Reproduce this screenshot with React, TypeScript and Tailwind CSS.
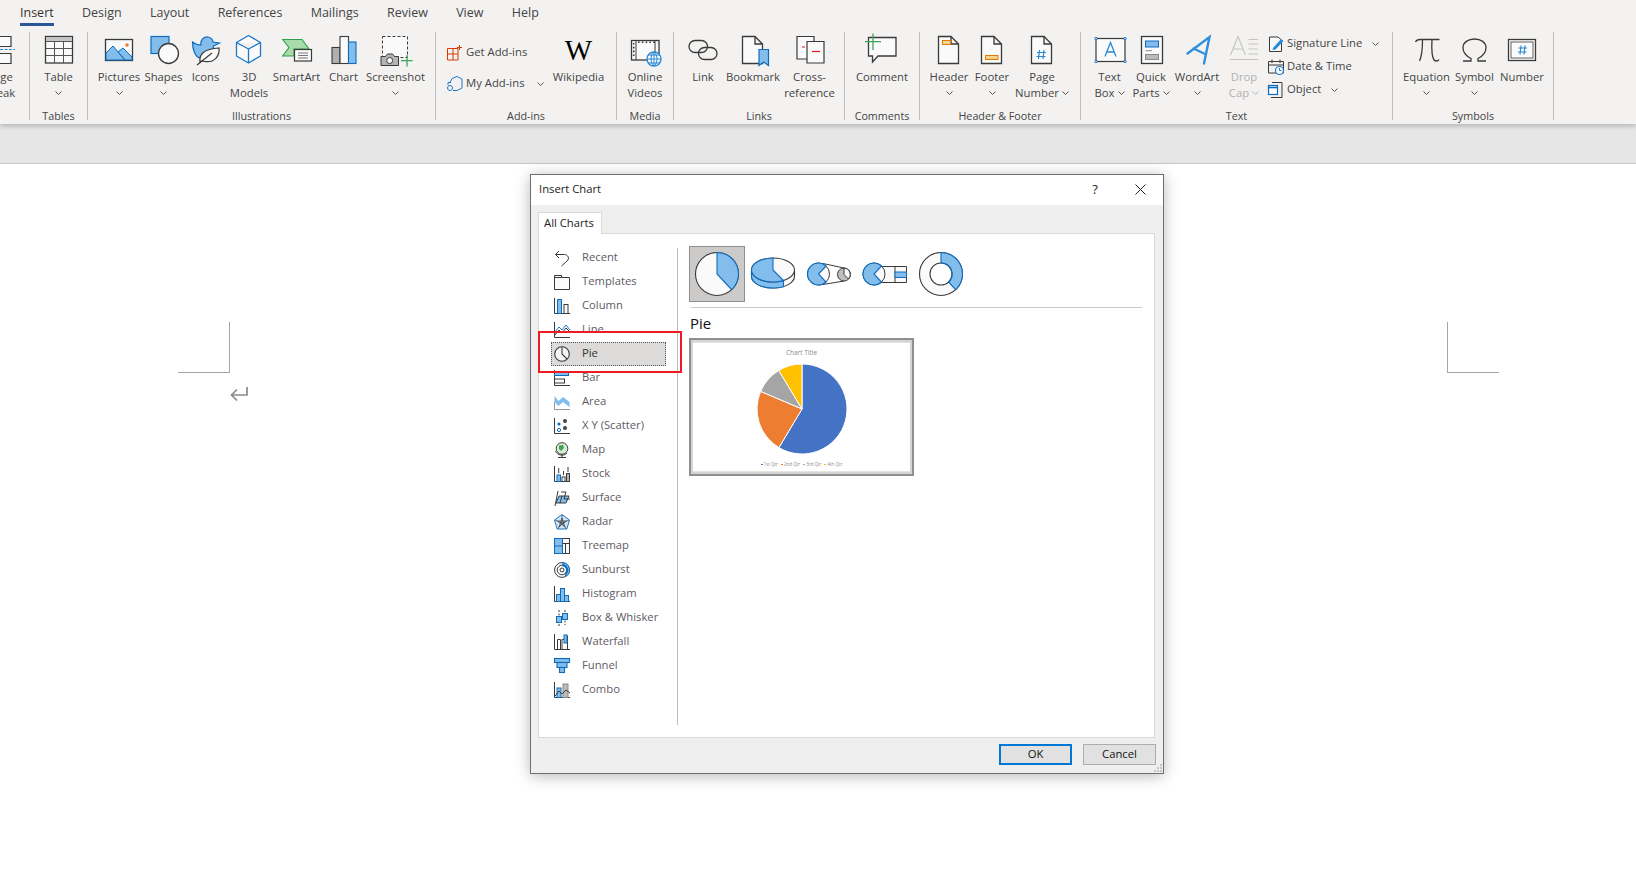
import type { ReactNode } from "react"

const B = "#83bdec"
const BS = "#0f6cbd"
const D = "#3a3a3a"
const L = "#fafafa"

const Ico = ({ children }: { children: ReactNode }) => (
  <svg width="32" height="32" viewBox="0 0 32 32" fill="none" className="overflow-visible">{children}</svg>
)

const Mini = ({ children }: { children: ReactNode }) => (
  <svg width="16" height="16" viewBox="0 0 16 16" fill="none" className="overflow-visible shrink-0">{children}</svg>
)

const Chevron = ({ color = "#555" }: { color?: string }) => (
  <svg width="7" height="4" viewBox="0 0 7 4" fill="none" className="inline-block shrink-0">
    <path d="M.5.5l3 3 3-3" stroke={color} />
  </svg>
)

const Doc = () => (
  <path d="M5.5 2.5H18L25.5 10V29.5H5.5ZM18 2.5V10H25.5" fill={L} stroke={D} strokeWidth="1.3" />
)

const largeIcons: Record<string, ReactNode> = {
  pageBreak: (
    <Ico>
      <path d="M16 2.5H27V12.5H16M16 19.5H27V29.5H16" fill={L} stroke={D} strokeWidth="1.2" />
      <path d="M16 15.5H31" stroke="#2a8ad4" strokeDasharray="3 1.5" />
    </Ico>
  ),
  table: (
    <Ico>
      <rect x="2.5" y="2.5" width="27" height="26.5" fill={L} stroke={D} strokeWidth="1.3" />
      <rect x="3" y="3" width="26" height="4.5" fill="#c4c4c4" />
      <path d="M11.5 8V29M20.5 8V29M3 14.5H29M3 21.5H29M3 7.5H29" stroke="#555" />
    </Ico>
  ),
  pictures: (
    <Ico>
      <rect x="2.5" y="5.5" width="27" height="21" fill={L} stroke={D} strokeWidth="1.3" />
      <path d="M3 26V19L10 12L22 26ZM15 18L20 14L29 23V26H22Z" fill={B} stroke={BS} strokeLinejoin="round" />
      <circle cx="24" cy="11" r="1.8" fill="#ed7d31" />
    </Ico>
  ),
  shapes: (
    <Ico>
      <rect x="3" y="2.5" width="18" height="17" fill={B} stroke={BS} strokeWidth="1.2" />
      <circle cx="20.5" cy="19.5" r="10" fill={L} stroke={D} strokeWidth="1.3" />
    </Ico>
  ),
  icons: (
    <Ico>
      <path d="M2.5 8C6 11 9 11 11 11C10 6 14 2.5 18 3C21 3.5 23 6 23 8L29.5 9L23.5 12C23.5 15 22 17 20 18L10 24C5 23 2.5 15 2.5 8Z" fill={B} stroke={BS} strokeWidth="1.2" />
      <path d="M10 28C9 21 13 15 29 14C30 22 24 29 15 27.5C13 27 11 27 10 28Z" fill={L} stroke={D} strokeWidth="1.2" />
      <path d="M7 31L22 19" stroke={D} strokeWidth="1.2" />
    </Ico>
  ),
  models: (
    <Ico>
      <path d="M15.5 1.5L27.5 8.5V22L15.5 29L3.5 22V8.5ZM3.5 8.5L15.5 15L27.5 8.5M15.5 15V29" fill={L} stroke="#1e78c8" strokeWidth="1.3" strokeLinejoin="round" />
    </Ico>
  ),
  smartArt: (
    <Ico>
      <path d="M1.7 5.5H21L28 15H13V22H1.7L8 13.5Z" fill="#a9dba8" stroke="#2f9e4f" strokeWidth="1.1" />
      <rect x="13.5" y="15.5" width="17" height="11.5" fill={L} stroke={D} strokeWidth="1.2" />
      <path d="M17 19H27M17 21.5H27M17 24H27" stroke="#777" />
    </Ico>
  ),
  chart: (
    <Ico>
      <rect x="4" y="13.5" width="8" height="16" fill="#b0b0b0" stroke={D} strokeWidth="1.1" />
      <rect x="12" y="2.5" width="8.5" height="27" fill={L} stroke={D} strokeWidth="1.1" />
      <rect x="20.5" y="8" width="7.5" height="21.5" fill={B} stroke={BS} strokeWidth="1.1" />
    </Ico>
  ),
  screenshot: (
    <Ico>
      <rect x="2.5" y="2.5" width="25" height="21" fill={L} stroke={D} strokeDasharray="3 2" />
      <path d="M1 22.5H5.5L7.5 20H12.5L14.5 22.5H18.5V31.5H1Z" fill="#b4b4b4" stroke={D} />
      <circle cx="9.7" cy="26.5" r="3" fill={L} stroke={D} />
      <path d="M27 21V32.5M21 26.7H32.5" stroke="#3fa35b" strokeWidth="1.3" />
    </Ico>
  ),
  videos: (
    <Ico>
      <rect x="2.5" y="6.5" width="27.5" height="19.5" fill={L} stroke={D} strokeWidth="1.3" />
      <path d="M7 7V26M26 7V22" stroke={D} />
      <path d="M4.7 9V24" stroke={D} strokeWidth="1.6" strokeDasharray="1.6 2.2" />
      <path d="M9 8.2H28" stroke={D} strokeWidth="1.4" strokeDasharray="1.6 2.2" />
      <circle cx="25" cy="25" r="7" fill={L} stroke="#2a8ad4" strokeWidth="1.4" />
      <path d="M18 25H32M25 18V32M19.5 21H30.5M19.5 29H30.5M25 18C21 21 21 29 25 32C29 29 29 21 25 18" stroke="#2a8ad4" />
    </Ico>
  ),
  link: (
    <Ico>
      <rect x="2" y="6.5" width="18.5" height="12" rx="6" stroke={D} strokeWidth="1.3" />
      <rect x="11.5" y="13.5" width="18.5" height="12" rx="6" stroke={D} strokeWidth="1.3" />
    </Ico>
  ),
  bookmark: (
    <Ico>
      <Doc />
      <path d="M22 15.5H31.5V31.5L26.7 28L22 31.5Z" fill={B} stroke={BS} strokeWidth="1.2" />
    </Ico>
  ),
  crossRef: (
    <Ico>
      <path d="M3 2.5H20V25H3Z" fill={L} stroke={D} strokeWidth="1.2" />
      <path d="M8 13H11" stroke="#e81123" />
      <path d="M13 7.5H30V29H13Z" fill={L} stroke={D} strokeWidth="1.2" />
      <path d="M18 17.5H26" stroke="#e81123" strokeWidth="1.2" />
    </Ico>
  ),
  comment: (
    <Ico>
      <path d="M2.5 3.5H30V22H12L6.5 28V22H2.5Z" fill={L} stroke={D} strokeWidth="1.3" />
      <path d="M7 -.5V16M-1 7.7H15" stroke="#3fa35b" strokeWidth="1.3" />
    </Ico>
  ),
  header: (
    <Ico>
      <Doc />
      <rect x="9.5" y="6.5" width="8" height="4" fill="#f8d58f" stroke="#e07b00" />
    </Ico>
  ),
  footer: (
    <Ico>
      <Doc />
      <rect x="9.5" y="21.5" width="12.5" height="4" fill="#f8d58f" stroke="#e07b00" />
    </Ico>
  ),
  pageNumber: (
    <Ico>
      <Doc />
      <path d="M13.5 16L12.5 25M18 16L17 25M11 18.5H20M10.5 22.5H19.5" stroke="#2a8ad4" strokeWidth="1.2" />
    </Ico>
  ),
  textBox: (
    <Ico>
      <rect x="2" y="4.5" width="29" height="23" fill={L} stroke={D} strokeWidth="1.2" />
      <path d="M11 22.5L16.5 8.5L22 22.5M13 18H20" stroke="#2a8ad4" strokeWidth="1.3" />
      <path d="M1 3.5h2v2H1zM30 3.5h2v2h-2zM1 26.5h2v2H1zM30 26.5h2v2h-2z" fill={L} stroke={BS} strokeWidth=".8" />
    </Ico>
  ),
  quickParts: (
    <Ico>
      <rect x="6.5" y="2.5" width="21" height="27" fill={L} stroke={D} strokeWidth="1.3" />
      <rect x="10.5" y="7" width="13" height="6" fill={B} stroke={BS} />
      <path d="M10.5 16.7H17" stroke="#888" />
      <rect x="10.5" y="20.5" width="13" height="5" fill="#bbb" stroke="#888" />
    </Ico>
  ),
  wordArt: (
    <Ico>
      <path d="M6.5 19.5L28.5 3L23 29.5M12.5 14.5L23 19.5" stroke="#2e8fdc" strokeWidth="2.4" strokeLinecap="round" />
    </Ico>
  ),
  dropCap: (
    <Ico>
      <path d="M2.5 21L10 2.5L17.5 21M5 15H15M20.5 5.5H30M20.5 10H30M20.5 15H30M20.5 20H30M2 25.5H30" stroke="#c4c4c4" strokeWidth="1.1" />
    </Ico>
  ),
  equation: (
    <Ico>
      <path d="M4.5 8C5.5 6 7 5.5 9 5.5H28.5M11.5 5.5C11.5 14 11 22 8.5 27M21 5.5C20.5 14 20.5 27 25 27C26.5 27 27.5 26.5 28 25.5" stroke={D} strokeWidth="1.3" />
    </Ico>
  ),
  symbol: (
    <Ico>
      <path d="M4 27H12V24.5C7 22 4 18 4 13.5C4 8.5 9 5 15.5 5C22 5 27 8.5 27 13.5C27 18 24 22 19 24.5V27H27" stroke={D} strokeWidth="1.3" />
    </Ico>
  ),
  number: (
    <Ico>
      <rect x="2.5" y="5.5" width="27" height="21" fill={L} stroke={D} strokeWidth="1.3" />
      <rect x="5" y="8" width="22" height="16" stroke={D} strokeWidth=".8" />
      <path d="M15 11.5L14 20.5M19 11.5L18 20.5M12.5 14H21M12 18H20.5" stroke="#2a8ad4" strokeWidth="1.2" />
    </Ico>
  ),
}

const Big = ({ w, icon, l1, l2, chevron, muted }: { w: string; icon: string; l1: string; l2?: string; chevron?: boolean; muted?: boolean }) => (
  <div className={`flex flex-col items-center shrink-0 pt-[2px] ${w} ${muted ? "text-[#b1b1b1]" : "text-[#444]"}`}>
    <div className="h-8 w-8">{largeIcons[icon]}</div>
    <div className="mt-[3px] h-4 leading-4 whitespace-nowrap">{l1}</div>
    <div className="h-4 leading-4 whitespace-nowrap flex items-center gap-[3px]">
      {l2}
      {chevron && <Chevron color={muted ? "#b1b1b1" : "#555"} />}
    </div>
  </div>
)

const Group = ({ w, pad, label, children }: { w: string; pad?: string; label: string; children: ReactNode }) => (
  <div className={`flex flex-col h-[92px] shrink-0 ${w}`}>
    <div className={`flex h-[76px] ${pad ?? ""}`}>{children}</div>
    <div className="h-4 leading-4 text-center text-[#444] text-[10.75px] whitespace-nowrap">{label}</div>
  </div>
)

const Divider = () => <div className="w-px h-[88px] bg-[#bdbdbd] shrink-0" />

const SmallRow = ({ h, icon, label, chevron }: { h: string; icon: ReactNode; label: string; chevron?: string }) => (
  <div className={`flex items-center text-[#444] whitespace-nowrap ${h}`}>
    {icon}
    <span className="ml-[3px]">{label}</span>
    {chevron && <span className={`flex ${chevron}`}><Chevron /></span>}
  </div>
)

const tabs = ["Insert", "Design", "Layout", "References", "Mailings", "Review", "View", "Help"]

const Ribbon = () => (
  <div className="relative z-10 h-[124px] bg-[#f3f2f1] shadow-[0_2px_5px_rgba(0,0,0,0.22)] text-[11.3px]">
    <div className="flex h-8 pl-5 gap-[28.3px] text-[12.5px] text-[#444]">
      {tabs.map((t) => (
        <div key={t} className="flex flex-col h-[26px]">
          <div className={`h-[23px] pt-[4px] flex items-center ${t === "Insert" ? "text-[#333]" : ""}`}>{t}</div>
          {t === "Insert" && <div className="h-[3px] bg-[#2b579a]" />}
        </div>
      ))}
    </div>
    <div className="flex -ml-[15px]">
      <div className="w-11 h-[76px] shrink-0"><Big w="w-[30px]" icon="pageBreak" l1="Page" l2="Break" /></div>
      <Divider />
      <Group w="w-[57px]" label="Tables"><Big w="w-[57px]" icon="table" l1="Table" chevron /></Group>
      <Divider />
      <Group w="w-[347px]" pad="pl-[7px]" label="Illustrations">
        <Big w="w-[48px]" icon="pictures" l1="Pictures" chevron />
        <Big w="w-[41px]" icon="shapes" l1="Shapes" chevron />
        <Big w="w-[43px]" icon="icons" l1="Icons" />
        <Big w="w-[44px]" icon="models" l1="3D" l2="Models" />
        <Big w="w-[51px]" icon="smartArt" l1="SmartArt" />
        <Big w="w-[43px]" icon="chart" l1="Chart" />
        <Big w="w-[61px]" icon="screenshot" l1="Screenshot" chevron />
      </Group>
      <Divider />
      <Group w="w-[180px]" pad="pl-[11px]" label="Add-ins">
        <div className="w-[98px] shrink-0 pt-[5px]">
          <SmallRow
            h="h-[31px]"
            label="Get Add-ins"
            icon={
              <Mini>
                <path d="M.5 3.5H11V15H.5ZM6 3.5V15M.5 9H11" stroke="#d83b01" />
                <path d="M12.5 0V5M10 2.5H15" stroke="#d83b01" />
              </Mini>
            }
          />
          <SmallRow
            h="h-[31px]"
            label="My Add-ins"
            chevron="ml-[12px]"
            icon={
              <Mini>
                <path d="M5 2.5L10 .5L15 3V12L10 14.5H6" stroke="#1e78c8" />
                <path d="M3 6.5L5 2.5" stroke="#1e78c8" />
                <circle cx="3" cy="12" r="2.5" fill={L} stroke="#1e78c8" />
                <path d="M1 9V6.5H4" stroke="#1e78c8" />
              </Mini>
            }
          />
        </div>
        <div className="w-[67px] flex flex-col items-center shrink-0 text-[#444] pt-[2px]">
          <div className="h-8 flex items-center font-['Liberation_Serif'] text-[29px] leading-8 text-black">W</div>
          <div className="mt-[3px] h-4 leading-4">Wikipedia</div>
        </div>
      </Group>
      <Divider />
      <Group w="w-[56px]" label="Media"><Big w="w-[56px]" icon="videos" l1="Online" l2="Videos" /></Group>
      <Divider />
      <Group w="w-[170px]" pad="pl-[6px]" label="Links">
        <Big w="w-[46px]" icon="link" l1="Link" />
        <Big w="w-[54px]" icon="bookmark" l1="Bookmark" />
        <Big w="w-[59px]" icon="crossRef" l1="Cross-" l2="reference" />
      </Group>
      <Divider />
      <Group w="w-[74px]" label="Comments"><Big w="w-[74px]" icon="comment" l1="Comment" /></Group>
      <Divider />
      <Group w="w-[160px]" pad="pl-[5px]" label="Header & Footer">
        <Big w="w-[48px]" icon="header" l1="Header" chevron />
        <Big w="w-[38px]" icon="footer" l1="Footer" chevron />
        <Big w="w-[62px]" icon="pageNumber" l1="Page" l2="Number" chevron />
      </Group>
      <Divider />
      <Group w="w-[311px]" pad="pl-[7px]" label="Text">
        <Big w="w-[43px]" icon="textBox" l1="Text" l2="Box" chevron />
        <Big w="w-[40px]" icon="quickParts" l1="Quick" l2="Parts" chevron />
        <Big w="w-[52px]" icon="wordArt" l1="WordArt" chevron />
        <Big w="w-[42px]" icon="dropCap" l1="Drop" l2="Cap" chevron muted />
        <div className="pl-[3px] shrink-0">
          <SmallRow
            h="h-[23px]"
            label="Signature Line"
            chevron="ml-[10px]"
            icon={
              <Mini>
                <path d="M1.5 1H10L13.5 4V15.5H1.5Z" fill={L} stroke={D} />
                <path d="M5 12L13 3L15.5 5L7.5 13.5L4.5 14Z" fill="#2a8ad4" />
              </Mini>
            }
          />
          <SmallRow
            h="h-[23px]"
            label="Date & Time"
            icon={
              <Mini>
                <path d="M.5 2.5H15.5V14H.5ZM.5 6H15.5M4 .5V4M12 .5V4" stroke={D} />
                <circle cx="11.5" cy="11.5" r="4" fill={L} stroke="#1e78c8" strokeWidth="1.2" />
                <path d="M11.5 9V11.5H13.5" stroke="#1e78c8" />
              </Mini>
            }
          />
          <SmallRow
            h="h-[23px]"
            label="Object"
            chevron="ml-[10px]"
            icon={
              <Mini>
                <path d="M4 .5H14V15.5H3" stroke={D} />
                <rect x=".5" y="3.5" width="9" height="9" fill={L} stroke={BS} strokeWidth="1.2" />
                <path d="M.5 5.5H9.5" stroke={BS} strokeWidth="1.6" />
              </Mini>
            }
          />
        </div>
      </Group>
      <Divider />
      <Group w="w-[160px]" pad="pl-[9px]" label="Symbols">
        <Big w="w-[49px]" icon="equation" l1="Equation" chevron />
        <Big w="w-[47px]" icon="symbol" l1="Symbol" chevron />
        <Big w="w-[48px]" icon="number" l1="Number" />
      </Group>
      <Divider />
    </div>
  </div>
)

const axes = <path d="M.5 0V15.5H16" stroke={D} />

const chartTypes: { name: string; icon: ReactNode }[] = [
  { name: "Recent", icon: <path d="M5 1L1.5 4.5L5 8M1.5 4.5H9C13 4 15.5 7 14 10L7.5 16" stroke={D} /> },
  { name: "Templates", icon: <path d="M.5 1.5H7.5V3.5H15.5V15.5H.5ZM.5 3.5H7.5" fill={L} stroke={D} /> },
  { name: "Column", icon: <>{axes}<rect x="3.5" y="1.5" width="4" height="14" fill={B} stroke={BS} /><rect x="10" y="6.5" width="4" height="9" fill={L} stroke={D} /></> },
  { name: "Line", icon: <>{axes}<path d="M1 10L5 5L8 8L12 3L16 8" stroke="#1e78c8" /><path d="M1 13L5 8L8 11L12 6L16 10" stroke={D} /></> },
  { name: "Pie", icon: <><circle cx="8" cy="8" r="7.3" fill="#f5f5f5" stroke={D} strokeWidth="1.1" /><path d="M8 1V8L13 13" stroke={D} strokeWidth="1.1" /></> },
  { name: "Bar", icon: <><path d="M.5 0V15.5H16" stroke={D} /><rect x=".5" y="1.5" width="14" height="4" fill={B} stroke={BS} /><rect x=".5" y="9" width="10" height="4" fill={L} stroke={D} /></> },
  { name: "Area", icon: <><path d="M.5 2L4.5 7L9 3L15.5 8V13L9 8L4.5 12L.5 8Z" fill={B} /><path d="M.5 8V15.5H16" stroke="#999" /></> },
  { name: "X Y (Scatter)", icon: <>{axes}<circle cx="5" cy="6" r="1.6" fill={BS} /><circle cx="11" cy="3" r="2" fill="#444" /><circle cx="11" cy="10" r="2" fill="#444" /><circle cx="5" cy="12" r="1.6" stroke={BS} /></> },
  { name: "Map", icon: <><circle cx="8" cy="6.5" r="5.8" fill="#d7ecd4" stroke={D} /><path d="M5 3.5L9 3L10 6L7 9L5 7Z" fill="#3fa35b" /><path d="M4 15.5H12M8 12.5V15.5M1.5 9C3 13 9 15 13 11" stroke={D} /></> },
  { name: "Stock", icon: <>{axes}<rect x="3" y="9" width="3.5" height="6.5" fill={B} stroke={BS} /><rect x="8" y="11" width="3" height="4.5" fill={L} stroke={D} /><rect x="12.5" y="7.5" width="3" height="8" fill="#b5b5b5" stroke={D} /><path d="M4.7 2V7M9.5 5V9M14 1V6" stroke={D} /></> },
  { name: "Surface", icon: <><path d="M5 6H15L12 13H2Z" fill={B} stroke={D} /><path d="M7 2H12L10 9H16M4 1L1 16M8 6L6 13" stroke={D} /></> },
  { name: "Radar", icon: <><path d="M8 .5L15.5 6L12.8 15H3.2L.5 6Z" fill="#cfe6f8" stroke="#1e78c8" /><path d="M8 1V9M8 9L15 6M8 9L1 6M8 9L12.5 15M8 9L3.5 15M3.5 7L12.5 7L5 13L8 4L11 13Z" stroke={D} strokeWidth=".7" /></> },
  { name: "Treemap", icon: <><rect x=".5" y=".5" width="15" height="15" fill={L} stroke={D} /><path d="M.5.5H8.5V15.5H.5Z" fill={B} stroke={BS} /><path d="M.5 8H8.5" stroke={BS} /><path d="M8.5 5.5H15.5M11.5 5.5V15.5" stroke={D} /></> },
  { name: "Sunburst", icon: <><circle cx="8" cy="8" r="7.4" stroke={D} /><path d="M8 .6A7.4 7.4 0 0 1 11 14.8A10 10 0 0 0 8 .6Z" fill={B} stroke={BS} /><circle cx="8" cy="8" r="4.8" stroke={D} /><path d="M8 3.2A4.8 4.8 0 0 1 11 12" stroke={BS} strokeWidth="2" /><circle cx="8" cy="8" r="2" stroke={D} /></> },
  { name: "Histogram", icon: <>{axes}<rect x="2.5" y="8.5" width="4" height="7" fill={B} stroke={BS} /><rect x="6.5" y="2.5" width="4" height="13" fill={B} stroke={BS} /><rect x="10.5" y="9.5" width="4" height="6" fill={B} stroke={BS} /></> },
  { name: "Box & Whisker", icon: <><path d="M5 0V16M11 0V15" stroke={D} strokeDasharray="2 1.5" /><rect x="2.5" y="6.5" width="5" height="6" fill={B} stroke={BS} /><rect x="8.5" y="3.5" width="5" height="6" fill={B} stroke={BS} /></> },
  { name: "Waterfall", icon: <>{axes}<path d="M3.5 15V5.5H6.5V15M8 15V5.5H11V2H13.5V15" stroke={D} /><rect x="10" y="1" width="3" height="8" fill={B} stroke={BS} /></> },
  { name: "Funnel", icon: <><rect x=".5" y=".5" width="15" height="4" fill={B} stroke={BS} strokeWidth="1.1" /><rect x="3" y="4.5" width="10" height="5" fill={B} stroke={BS} strokeWidth="1.1" /><rect x="5.5" y="9.5" width="5" height="5" fill={B} stroke={BS} strokeWidth="1.1" /></> },
  { name: "Combo", icon: <>{axes}<rect x="3" y="6" width="4" height="9.5" fill={B} stroke={BS} /><rect x="9" y="2" width="5" height="13.5" fill="#bbb" stroke="#888" /><path d="M1 14L5 9L8 12L12 8L16 11" stroke={D} /></> },
]

const slicePoint = (cx: number, cy: number, r: number, deg: number) => {
  const a = (deg * Math.PI) / 180
  return `${(cx + r * Math.sin(a)).toFixed(2)} ${(cy - r * Math.cos(a)).toFixed(2)}`
}

const slice = (cx: number, cy: number, r: number, from: number, to: number) =>
  `M${cx} ${cy}L${slicePoint(cx, cy, r, from)}A${r} ${r} 0 ${to - from > 180 ? 1 : 0} 1 ${slicePoint(cx, cy, r, to)}Z`

const Sub = ({ children }: { children: ReactNode }) => (
  <svg width="44" height="44" viewBox="0 0 44 44" fill="none" className="overflow-visible">{children}</svg>
)

const subtypes: ReactNode[] = [
  <Sub key="pie">
    <circle cx="22" cy="22" r="21.5" fill={L} stroke={D} strokeWidth="1.1" />
    <path d={slice(22, 22, 21.5, 0, 137)} fill={B} stroke={BS} strokeWidth="1.1" />
  </Sub>,
  <Sub key="pie3d">
    <path d="M.5 18V24C.5 31 10 36 22 36C34 36 43.5 31 43.5 24V18Z" fill={L} stroke={D} strokeWidth="1.1" />
    <path d="M.5 18V24C.5 31 10 36 22 36C26 36 30 35.5 32.5 34.8V28.5L22 18Z" fill={B} stroke={BS} strokeWidth="1.1" />
    <ellipse cx="22" cy="18" rx="21.5" ry="12" fill={L} stroke={D} strokeWidth="1.1" />
    <path d="M22 6C10 6 .5 11.5 .5 18C.5 24.5 10 30 22 30C26 30 29.5 29.5 32.5 28.5L22 18Z" fill={B} stroke={BS} strokeWidth="1.1" />
  </Sub>,
  <Sub key="pieofpie">
    <path d="M16 11.5L37 16M16 32.5L37 29" stroke={D} />
    <circle cx="11.5" cy="22" r="11" fill={L} stroke={D} />
    <path d="M19 14L11.5 22L19 30A11 11 0 1 1 19 14Z" fill={B} stroke={BS} strokeWidth="1.1" />
    <circle cx="37" cy="22.5" r="6.5" fill="#bdbdbd" stroke={D} />
    <path d="M37 16V22.5L41.5 27A6.5 6.5 0 0 0 37 16Z" fill={L} stroke={D} />
  </Sub>,
  <Sub key="barofpie">
    <path d="M16 14.5H43.5V30.5H16M32 14.5V30.5" fill={L} stroke={D} />
    <rect x="32" y="20" width="11.5" height="5.5" fill={B} stroke={BS} />
    <circle cx="11" cy="22" r="11" fill={L} stroke={D} />
    <path d="M18.5 14L11 22L18.5 30A11 11 0 1 1 18.5 14Z" fill={B} stroke={BS} strokeWidth="1.1" />
  </Sub>,
  <Sub key="donut">
    <circle cx="22" cy="22" r="21.5" fill={L} stroke={D} strokeWidth="1.1" />
    <path d={slice(22, 22, 21.5, 0, 137)} fill={B} stroke={BS} strokeWidth="1.1" />
    <circle cx="22" cy="22" r="11" fill="white" stroke={D} strokeWidth="1.1" />
    <path d="M22 11A11 11 0 0 1 29.5 30" stroke={BS} strokeWidth="1.1" />
  </Sub>,
]

const legend = [
  { name: "1st Qtr", color: "bg-[#4472c4]" },
  { name: "2nd Qtr", color: "bg-[#ed7d31]" },
  { name: "3rd Qtr", color: "bg-[#a5a5a5]" },
  { name: "4th Qtr", color: "bg-[#ffc000]" },
]

const PiePreview = () => (
  <div className="mt-[4px] w-[225px] h-[138px] border-2 border-[#8f8f8f] bg-[#d4d4d4] p-[2px]">
    <div className="h-full bg-white border-y border-[#e4e4e4] flex flex-col items-center">
      <div className="h-4 mt-[2px] leading-4 text-[6.5px] text-[#8a8a8a]">Chart Title</div>
      <svg width="92" height="92" viewBox="0 0 92 92" className="mt-[2px]">
        <path d={slice(46, 46, 45, 0, 210.9)} fill="#4472c4" stroke="white" />
        <path d={slice(46, 46, 45, 210.9, 293.1)} fill="#ed7d31" stroke="white" />
        <path d={slice(46, 46, 45, 293.1, 329)} fill="#a5a5a5" stroke="white" />
        <path d={slice(46, 46, 45, 329, 360)} fill="#ffc000" stroke="white" />
      </svg>
      <div className="flex gap-[3px] mt-[4px] text-[4.5px] leading-[10px] text-[#8a8a8a]">
        {legend.map((l) => (
          <div key={l.name} className="flex items-center gap-px">
            <span className={`w-[2px] h-[1px] ${l.color}`} />
            {l.name}
          </div>
        ))}
      </div>
    </div>
  </div>
)

const InsertChart = () => (
  <div className="absolute left-[530px] top-[174px] z-20 w-[634px] h-[600px] flex flex-col bg-[#efefef] border border-[#6e6e6e] shadow-[0_2px_14px_rgba(0,0,0,0.28)] text-[11.25px]">
    <div className="h-[30px] pb-px bg-white flex items-center pl-2 text-[#222] shrink-0">
      <span className="flex-1">Insert Chart</span>
      <span className="text-[13px] w-[14px] text-center mr-[33px] text-[#222]">?</span>
      <svg width="11" height="11" viewBox="0 0 11 11" className="mr-[17px]"><path d="M.5.5l10 10m0-10l-10 10" stroke="#222" /></svg>
    </div>
    <div className="flex-1 pl-[7px] pr-[7px] pt-[7px] flex flex-col">
      <div className="relative z-10 -mb-px w-[64px] h-[22px] pr-[2px] bg-white border border-b-0 border-[#d9d9d9] flex items-center justify-center text-[#222]">All Charts</div>
      <div className="relative h-[505px] mr-px bg-white border border-[#d9d9d9] flex">
        <div className="w-[139px] h-[477px] mt-[14px] border-r border-[#bdbdbd] shrink-0">
          <div className="-mt-[2px]">
            {chartTypes.map((c) => (
              <div
                key={c.name}
                className={`h-6 ml-[12px] w-[115px] flex items-center gap-[12px] pl-[2px] pb-px border border-transparent ${
                  c.name === "Pie" ? "bg-[#dcdbd9] border-dotted !border-[#555] text-[#333]" : "text-[#5f5a66]"
                }`}
              >
                <Mini>{c.icon}</Mini>
                {c.name}
              </div>
            ))}
          </div>
        </div>
        <div className="pl-[11px] pt-[12px]">
          <div className="flex">
            {subtypes.map((s, i) => (
              <div key={i} className={`w-14 h-14 flex items-center justify-center border ${i === 0 ? "bg-[#cdcbc9] border-[#8f8f8f]" : "border-transparent"}`}>{s}</div>
            ))}
          </div>
          <div className="ml-[2px] mt-[5px] w-[451px] h-px bg-[#c8c8c8]" />
          <div className="ml-[1px] mt-[5px] h-[21px] leading-[21px] text-[15px] text-[#111]">Pie</div>
          <PiePreview />
        </div>
        <div className="absolute left-[-1px] top-[97px] w-[144px] h-[42px] border-2 border-[#ed1c24]" />
      </div>
      <div className="flex justify-end gap-[11px] pt-[6px] text-[#111]">
        <button className="w-[73px] h-[21px] border-2 border-[#0078d7] bg-[#e1e1e1]">OK</button>
        <button className="w-[73px] h-[21px] border border-[#adadad] bg-[#e1e1e1]">Cancel</button>
      </div>
    </div>
    <svg width="9" height="9" viewBox="0 0 9 9" className="absolute right-[1px] bottom-[1px]">
      <path d="M7 1h2v2H7zM4 4h2v2H4zM7 4h2v2H7zM1 7h2v2H1zM4 7h2v2H4zM7 7h2v2H7z" fill="#c4c4c4" />
    </svg>
  </div>
)

export default function App() {
  return (
    <div className="relative h-screen w-full overflow-hidden bg-white font-['Open_Sans',sans-serif] flex flex-col">
      <Ribbon />
      <div className="h-[40px] bg-[#e6e6e6] border-b border-[#c6c6c6] shrink-0" />
      <div className="flex justify-between pl-[178px] pr-[137px] pt-[158px]">
        <div>
          <div className="w-[52px] h-[51px] border-r border-b border-[#a6a6a6]" />
          <svg width="18" height="16" viewBox="0 0 18 16" fill="none" className="ml-[52px] mt-[14px]">
            <path d="M17 0V8H2M7 2.5L1.5 8L7 13.5" stroke="#8a8a8a" strokeWidth="1.7" />
          </svg>
        </div>
        <div className="w-[52px] h-[51px] border-l border-b border-[#a6a6a6]" />
      </div>
      <InsertChart />
    </div>
  )
}
